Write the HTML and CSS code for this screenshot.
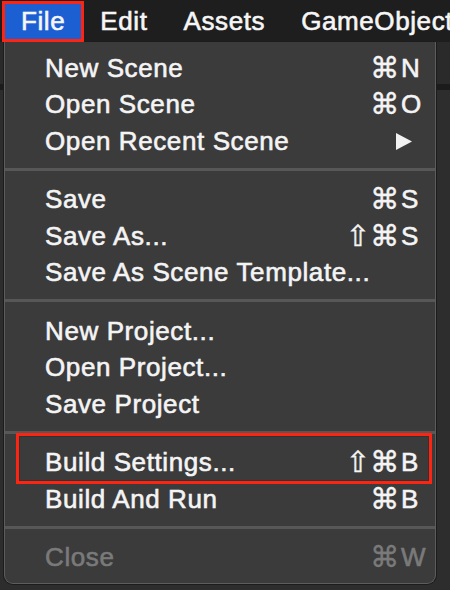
FILE: index.html
```html
<!DOCTYPE html>
<html>
<head>
<meta charset="utf-8">
<link rel="stylesheet" href="styles.css">
</head>
<body>
<div class="menubar">
  <span class="title active">File</span>
  <span class="title">Edit</span>
  <span class="title">Assets</span>
  <span class="title">GameObject</span>
</div>
<div class="menu">
  <div class="row"><span class="label">New Scene</span><span class="mods">⌘</span><span class="key">N</span></div>
  <div class="row"><span class="label">Open Scene</span><span class="mods">⌘</span><span class="key">O</span></div>
  <div class="row"><span class="label">Open Recent Scene</span><span class="mods"></span><span class="key"><svg class="arrow" width="16" height="17" viewBox="0 0 16 17"><polygon points="0,0 16,8.5 0,17" fill="#f2f2f2"/></svg></span></div>
  <div class="sep"></div>
  <div class="row"><span class="label">Save</span><span class="mods">⌘</span><span class="key">S</span></div>
  <div class="row"><span class="label">Save As...</span><span class="mods">⇧⌘</span><span class="key">S</span></div>
  <div class="row"><span class="label">Save As Scene Template...</span><span class="mods"></span><span class="key"></span></div>
  <div class="sep"></div>
  <div class="row"><span class="label">New Project...</span><span class="mods"></span><span class="key"></span></div>
  <div class="row"><span class="label">Open Project...</span><span class="mods"></span><span class="key"></span></div>
  <div class="row"><span class="label">Save Project</span><span class="mods"></span><span class="key"></span></div>
  <div class="sep"></div>
  <div class="row marked"><span class="label">Build Settings...</span><span class="mods">⇧⌘</span><span class="key">B</span></div>
  <div class="row"><span class="label">Build And Run</span><span class="mods">⌘</span><span class="key">B</span></div>
  <div class="sep"></div>
  <div class="row disabled"><span class="label">Close</span><span class="mods">⌘</span><span class="key">W</span></div>
</div>
</body>
</html>
```

FILE: styles.css
```css
html, body {
  margin: 0;
  padding: 0;
}
body {
  width: 450px;
  height: 590px;
  overflow: hidden;
  background: linear-gradient(to bottom, #1e1e1e 0, #1e1e1e 42px, #2a2a2a 42px, #2a2a2a 84px, #1b1b1b 84px, #1b1b1b 90px, #2d2d2d 90px);
  font-family: "Liberation Sans", Arial, sans-serif;
  font-size: 26px;
  letter-spacing: 0.6px;
  color: #f4f4f4;
  -webkit-text-stroke: 0.6px currentColor;
}
.menubar {
  height: 42px;
  display: flex;
  align-items: stretch;
  padding-left: 3px;
  white-space: nowrap;
}
.title {
  display: flex;
  align-items: center;
  padding: 0 18px;
  color: #f6f6f6;
}
.title.active {
  background: #1c5fd3;
  box-shadow: inset 0 0 0 3px #ff2412;
  margin-top: 1px;
  padding: 0 19px;
  margin-left: -1px;
  margin-right: -2px;
}
.menu {
  margin-left: 4px;
  width: 430px;
  background: #3b3b3c;
  border: 1px solid #5d5d5d;
  border-top: none;
  border-radius: 0 0 9px 9px;
  padding: 8px 0 7px;
  box-shadow: 0 0 0 1px #1c1c1c;
}
.row {
  position: relative;
  height: 36.5px;
  display: flex;
  align-items: center;
  padding: 0 7px 0 40px;
  white-space: nowrap;
}
.label {
  flex: 1;
}
.mods {
  font-family: "DejaVu Sans", sans-serif;
  font-size: 29px;
  line-height: 1;
  letter-spacing: 0;
  text-align: right;
  -webkit-text-stroke: 0.4px currentColor;
}
.key {
  width: 27px;
  padding-left: 2px;
  display: flex;
  align-items: center;
}
.arrow {
  margin-left: -5px;
}
.sep {
  height: 22px;
  display: flex;
  align-items: center;
}
.sep::before {
  content: "";
  display: block;
  width: 100%;
  height: 3px;
  background: #575757;
  margin-top: -3px;
}
.marked::after {
  content: "";
  position: absolute;
  left: 11px;
  right: 3px;
  top: -11.5px;
  bottom: -3px;
  border: 3px solid #ff2412;
  box-shadow: inset 0 0 0 1px #283636;
}
.disabled {
  color: #7a7a7a;
}
```
